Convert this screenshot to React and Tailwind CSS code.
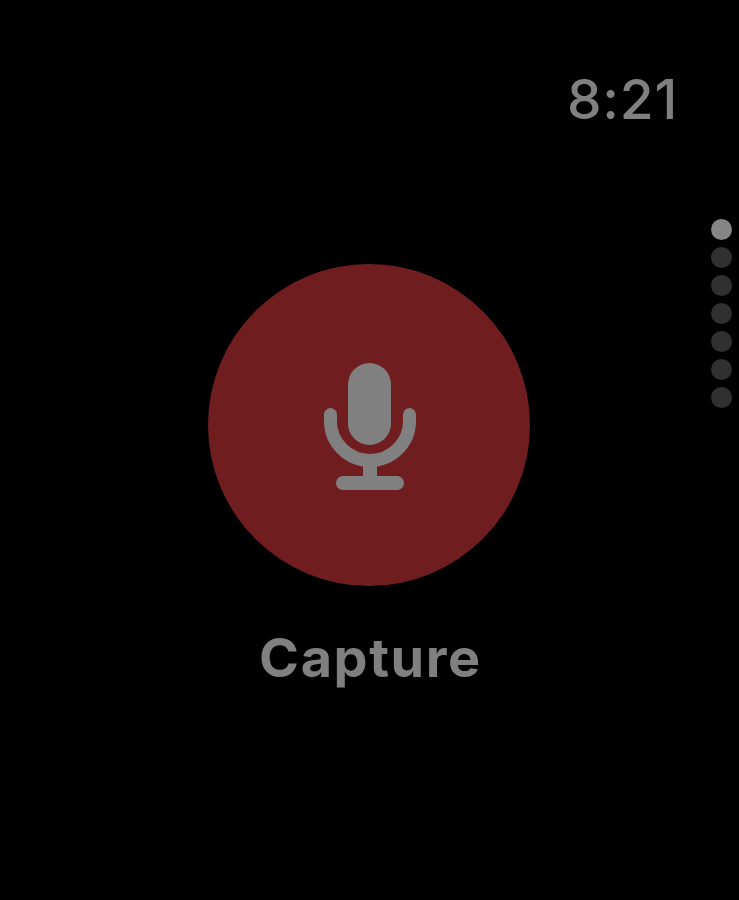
export default function App() {
  return (
    <div className="relative h-[900px] w-[739px] overflow-hidden bg-black font-['Inter',sans-serif] text-[#808080]">
      <header className="flex justify-end pr-[61px] pt-[66px]">
        <span className="text-[55px] leading-[66px] font-medium tracking-[0.75px]">8:21</span>
      </header>

      {/* Page dots */}
      <div className="absolute right-[7px] top-[219px] flex flex-col gap-[7px]">
        <span className="h-[21px] w-[21px] rounded-full bg-[#858585]" />
        {[0, 1, 2, 3, 4, 5].map(i => (
          <span key={i} className="h-[21px] w-[21px] rounded-full bg-[#303030]" />
        ))}
      </div>

      <main className="mt-[132px] flex w-[738px] flex-col items-center">
        <button className="flex h-[322px] w-[322px] items-center justify-center rounded-full bg-[#701d1f]">
          <svg className="mt-[2px] ml-[2px]" width="92" height="127" viewBox="0 0 92 127" fill="none">
            <rect x="24" y="0" width="43" height="82" rx="21.5" fill="#808080" />
            <path d="M6.5 51.5V58A39.5 39.5 0 0 0 85.5 58V51.5" stroke="#808080" strokeWidth="13" strokeLinecap="round" />
            <rect x="39" y="98" width="14" height="18" fill="#808080" />
            <rect x="12" y="113" width="68" height="14" rx="7" fill="#808080" />
          </svg>
        </button>
        <h1 className="mt-[40px] ml-[3px] text-[54px] leading-[64px] font-bold tracking-[1.6px]">Capture</h1>
      </main>
    </div>
  );
}
